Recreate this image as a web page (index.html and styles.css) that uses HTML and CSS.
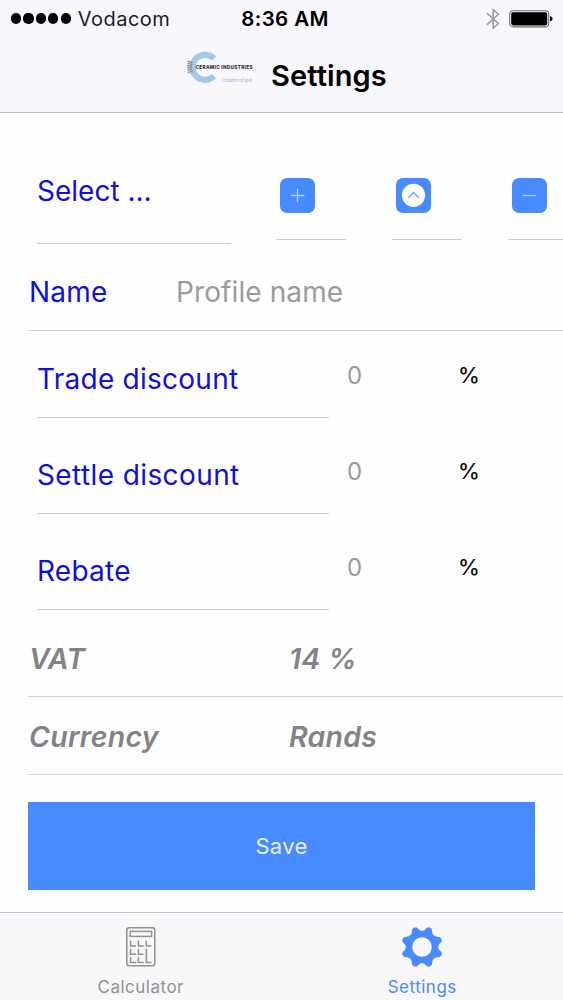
FILE: index.html
```
<!DOCTYPE html>
<html lang="en">
<head>
    <meta charset="UTF-8">
    <meta name="viewport" content="width=device-width, initial-scale=1.0">
    <title>Settings</title>
    <link rel="stylesheet" href="styles.css">
</head>
<body>
    <header class="navbar">
        <div class="status">
            <div class="carrier">
                <span class="signal"><i></i><i></i><i></i><i></i><i></i></span>
                <span class="carrier-name">Vodacom</span>
            </div>
            <span class="clock">8:36 AM</span>
            <div class="indicators">
                <svg class="bluetooth" width="14" height="24" viewBox="0 0 14 24" fill="none" stroke="#9b9a9f" stroke-width="1.5">
                    <path d="M1 6.2 L12.4 16.6 L7.2 21.2 V2.6 L12.4 7.2 L1 17.6"/>
                </svg>
                <svg class="battery" width="44" height="18" viewBox="0 0 44 18">
                    <rect x="0.7" y="0.7" width="39" height="16.2" rx="3.4" fill="none" stroke="#6d6c70" stroke-width="1.1"/>
                    <rect x="2.2" y="2.2" width="36" height="13.2" rx="1.8" fill="#000"/>
                    <path d="M41 6 Q43.6 6.6 43.6 8.8 Q43.6 11 41 11.6 Z" fill="#111"/>
                </svg>
            </div>
        </div>
        <div class="title-bar">
            <svg class="logo" width="70" height="36" viewBox="0 0 70 36">
                <path d="M29 9.4 A12.6 12.6 0 1 0 29 27.2" fill="none" stroke="#a9cdec" stroke-width="6"/>
                <path d="M29 9.4 A12.6 12.6 0 1 0 29 27.2" fill="none" stroke="#86b7e2" stroke-width="6" stroke-dasharray="1 1.6" opacity="0.6"/>
                <path d="M5.6 12.4 Q3.6 18 5.6 24.4" fill="none" stroke="#8a8c90" stroke-width="5" stroke-dasharray="1.2 0.8"/>
                <text class="logo-name" x="10.5" y="20.2" textLength="57">CERAMIC INDUSTRIES</text>
                <text class="logo-tag" x="36.5" y="33" textLength="31">Creators of style</text>
            </svg>
            <h1>Settings</h1>
        </div>
    </header>

    <main class="form">
        <div class="profile-row">
            <div class="select">Select ...</div>
            <div class="action">
                <button aria-label="Add">
                    <svg width="35" height="35" viewBox="0 0 36 36" fill="none" stroke="#b9d6ff" stroke-width="1.3">
                        <path d="M11 18 H25 M18 11 V25"/>
                    </svg>
                </button>
            </div>
            <div class="action">
                <button aria-label="Upload">
                    <svg width="35" height="35" viewBox="0 0 36 36" fill="none">
                        <circle cx="18" cy="17.8" r="11.9" fill="#fff"/>
                        <path d="M12.6 20.4 L18 14.8 L23.4 20.4" stroke="#5b96f5" stroke-width="1.3"/>
                    </svg>
                </button>
            </div>
            <div class="action">
                <button aria-label="Remove">
                    <svg width="35" height="35" viewBox="0 0 36 36" fill="none" stroke="#b9d6ff" stroke-width="1.3">
                        <path d="M11 18 H25"/>
                    </svg>
                </button>
            </div>
        </div>

        <div class="row name">
            <span class="label">Name</span>
            <span class="placeholder">Profile name</span>
        </div>

        <div class="discount first">
            <span class="label">Trade discount</span>
            <span class="amount">0</span>
            <span class="percent">%</span>
        </div>
        <div class="discount">
            <span class="label settle">Settle discount</span>
            <span class="amount">0</span>
            <span class="percent">%</span>
        </div>
        <div class="discount">
            <span class="label">Rebate</span>
            <span class="amount">0</span>
            <span class="percent">%</span>
        </div>

        <div class="row fixed vat">
            <span>VAT</span>
            <span>14 %</span>
        </div>
        <div class="row fixed currency">
            <span>Currency</span>
            <span>Rands</span>
        </div>

        <button class="save">Save</button>
    </main>

    <nav class="tabs">
        <a class="tab">
            <svg width="44" height="44" viewBox="0 0 44 44" fill="none" stroke="#929292" stroke-width="1.5">
                <rect x="7.8" y="2.8" width="28" height="38" rx="2.5"/>
                <rect x="11.2" y="6.4" width="21.4" height="5"/>
                <path d="M11.6 15.5 V21 H17 M19.4 15.5 V21 H24.8 M27.2 15.5 V21 H32.4 M11.6 23.8 V29.2 H17 M19.4 23.8 V29.2 H24.4 M11.6 32 V37.4 H17 M19.4 32 V37.4 H24.8 M27.4 23.8 V37.4 H32.4"/>
            </svg>
            <span>Calculator</span>
        </a>
        <a class="tab active">
            <svg width="44" height="44" viewBox="-22 -22 44 44" fill="#488aff">
                <path fill-rule="evenodd" d="M-7.9 -19.6 L-5.2 -19.6 Q0 -12.5 5.2 -19.6 L7.9 -19.6 L9.9 -17.7 Q9.5 -9.5 17.7 -9.9 L19.6 -7.9 L19.6 -5.2 Q12.5 0 19.6 5.2 L19.6 7.9 L17.7 9.9 Q9.5 9.5 9.9 17.7 L7.9 19.6 L5.2 19.6 Q0 12.5 -5.2 19.6 L-7.9 19.6 L-9.9 17.7 Q-9.5 9.5 -17.7 9.9 L-19.6 7.9 L-19.6 5.2 Q-12.5 0 -19.6 -5.2 L-19.6 -7.9 L-17.7 -9.9 Q-9.5 -9.5 -9.9 -17.7 Z M9.8 0 A9.8 9.8 0 1 0 -9.8 0 A9.8 9.8 0 1 0 9.8 0 Z"/>
            </svg>
            <span>Settings</span>
        </a>
    </nav>
</body>
</html>
```
FILE: styles.css
```
* {
    box-sizing: border-box;
}
body {
    margin: 0;
    height: 1000px;
    display: flex;
    flex-direction: column;
    overflow: hidden;
    background-color: #fefefe;
    font-family: Inter, "Liberation Sans", sans-serif;
    color: #000;
    white-space: nowrap;
}
button {
    border: none;
    padding: 0;
    font-family: inherit;
    background-color: #488aff;
}
svg {
    display: block;
}

/* top bar */
.navbar {
    height: 113px;
    background-color: #f8f7fb;
    border-bottom: 1px solid #bdbcc0;
}
.status {
    display: grid;
    grid-template-columns: 1fr auto 1fr;
    align-items: center;
    height: 37px;
    padding: 0 10px 0 11px;
}
.carrier {
    display: flex;
    align-items: center;
    gap: 7px;
}
.signal {
    display: flex;
    gap: 2.2px;
}
.signal i {
    width: 10.2px;
    height: 10.2px;
    border-radius: 50%;
    background-color: #000;
}
.carrier-name {
    font-size: 20px;
    letter-spacing: 0.5px;
    color: #1c1c1e;
}
.clock {
    padding-left: 6px;
    font-size: 20.5px;
    font-weight: 600;
    letter-spacing: 0.4px;
}
.indicators {
    display: flex;
    justify-content: flex-end;
    align-items: center;
    gap: 9px;
}
.title-bar {
    display: flex;
    align-items: center;
    height: 75px;
    padding: 2px 0 0 185px;
}
.logo {
    margin: 0 16px 17px 0;
}
.logo-name {
    font-size: 4.7px;
    font-weight: 800;
    fill: #33363c;
}
.logo-tag {
    font-family: "Liberation Serif", serif;
    font-size: 5.4px;
    font-style: italic;
    fill: #8fb4d3;
}
h1 {
    margin: 0;
    font-size: 29px;
    font-weight: 600;
    letter-spacing: 0.1px;
}

/* form */
.profile-row {
    display: flex;
    height: 131px;
    padding-left: 37px;
}
.select {
    flex: 0 0 194px;
    margin-right: 45px;
    padding-top: 58px;
    border-bottom: 1px solid #d0cdd0;
    font-size: 28px;
    line-height: 40px;
    color: #1010d6;
}
.action {
    flex: 0 0 70px;
    height: 127px;
    margin-right: 46px;
    padding: 65px 0 0 3.5px;
    border-bottom: 1px solid #cfcfcf;
}
.action button {
    width: 35px;
    height: 35px;
    border-radius: 7px;
}
.row {
    display: flex;
    align-items: center;
    height: 87px;
    margin-left: 28px;
    padding-top: 10px;
    border-bottom: 1px solid #d2d0d4;
    font-size: 28px;
}
.label {
    color: #1010d6;
    letter-spacing: 0.25px;
}
.name .label {
    width: 148px;
    padding-left: 1px;
}
.placeholder {
    color: #9b9b9b;
    letter-spacing: 0.1px;
}
.discount {
    display: flex;
    align-items: flex-end;
    height: 96px;
    padding-left: 37px;
}
.discount.first {
    height: 87px;
}
.discount .label {
    width: 292px;
    height: 79px;
    border-bottom: 1px solid #d0c9d2;
    font-size: 28px;
    line-height: 80px;
}
.discount .settle {
    letter-spacing: 0.4px;
}
.amount {
    width: 129px;
    padding-left: 18px;
    font-size: 24px;
    line-height: 85px;
    color: #9b9b9b;
}
.percent {
    font-size: 22px;
    font-weight: 500;
    line-height: 85px;
    color: #111;
}
.fixed {
    font-size: 28.5px;
    font-weight: 600;
    font-style: italic;
    letter-spacing: 0.25px;
    color: #838286;
}
.fixed span:first-child {
    width: 261px;
    padding-left: 1px;
}
.currency {
    height: 78px;
    padding-top: 1px;
}
.save {
    display: block;
    width: 507px;
    height: 88px;
    margin: 27px 0 0 28px;
    font-size: 22px;
    letter-spacing: 0.3px;
    color: #e6f0ff;
}

/* bottom tabs */
.tabs {
    display: flex;
    height: 88px;
    margin-top: auto;
    background-color: #f8f7fa;
    border-top: 1px solid #c3c2c6;
}
.tab {
    flex: 1;
    display: flex;
    flex-direction: column;
    align-items: center;
    padding-top: 12px;
    font-size: 17px;
    line-height: 20px;
    letter-spacing: 0.5px;
    color: #929292;
}
.tab span {
    margin-top: 8px;
}
.tab.active {
    color: #488aff;
}
```
